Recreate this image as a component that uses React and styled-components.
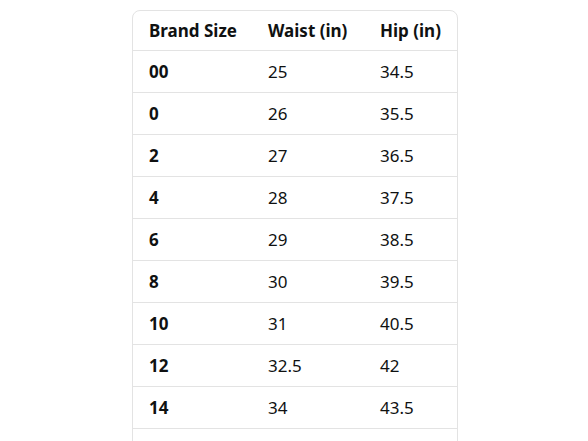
import React from "react";
import styled, { createGlobalStyle } from "styled-components";

const Global = createGlobalStyle`
  html, body { margin: 0; padding: 0; background: #ffffff; }
  body { font-family: "Noto Sans", "Liberation Sans", sans-serif; color: #0f1111; }
`;

const Page = styled.div`
  padding: 10px 0 0 132px;
`;

const Card = styled.div`
  width: 324px;
  border: 1px solid #e3e3e3;
  border-radius: 8px;
  overflow: hidden;
  background: #fff;
`;

const Table = styled.table`
  width: 100%;
  border-collapse: separate;
  border-spacing: 0;
  table-layout: fixed;
`;

const Col = styled.col`
  width: ${(p) => p.$w}px;
`;

const Th = styled.th`
  height: 39px;
  padding: 0 0 0 16px;
  text-align: left;
  font-size: 17px;
  font-weight: 700;
  vertical-align: middle;
  white-space: nowrap;
`;

const Td = styled.td`
  height: 41px;
  padding: 0 0 0 16px;
  border-top: 1px solid #e3e3e3;
  font-size: 17px;
  font-weight: ${(p) => (p.$bold ? 700 : 400)};
  vertical-align: middle;
  white-space: nowrap;
`;

const rows = [
  ["00", "25", "34.5"],
  ["0", "26", "35.5"],
  ["2", "27", "36.5"],
  ["4", "28", "37.5"],
  ["6", "29", "38.5"],
  ["8", "30", "39.5"],
  ["10", "31", "40.5"],
  ["12", "32.5", "42"],
  ["14", "34", "43.5"],
  ["", "", ""],
];

export default function App() {
  return (
    <>
      <Global />
      <Page>
        <Card>
          <Table>
            <colgroup>
              <Col $w={119} />
              <Col $w={112} />
              <Col $w={93} />
            </colgroup>
            <thead>
              <tr>
                <Th>Brand Size</Th>
                <Th>Waist (in)</Th>
                <Th>Hip (in)</Th>
              </tr>
            </thead>
            <tbody>
              {rows.map((r, i) => (
                <tr key={i}>
                  <Td $bold>{r[0]}</Td>
                  <Td>{r[1]}</Td>
                  <Td>{r[2]}</Td>
                </tr>
              ))}
            </tbody>
          </Table>
        </Card>
      </Page>
    </>
  );
}
